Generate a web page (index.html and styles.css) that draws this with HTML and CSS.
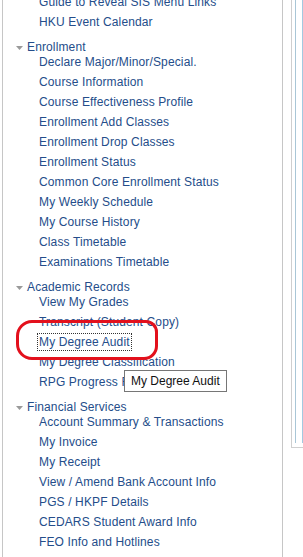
FILE: index.html
```html
<!DOCTYPE html>
<html>
<head>
<meta charset="utf-8">
<link rel="stylesheet" href="styles.css">
</head>
<body>
<div class="page">
  <nav class="panel">
    <ul class="items first">
      <li><a href="#">Guide to Reveal SIS Menu Links</a></li>
      <li><a href="#">HKU Event Calendar</a></li>
    </ul>
    <div class="section">
      <div class="head"><svg class="tri" width="7" height="4" viewBox="0 0 7 4"><path d="M0 0H7L3.5 4Z" fill="#9a9a9a"/></svg><a href="#">Enrollment</a></div>
      <ul class="items">
        <li><a href="#">Declare Major/Minor/Special.</a></li>
        <li><a href="#">Course Information</a></li>
        <li><a href="#">Course Effectiveness Profile</a></li>
        <li><a href="#">Enrollment Add Classes</a></li>
        <li><a href="#">Enrollment Drop Classes</a></li>
        <li><a href="#">Enrollment Status</a></li>
        <li><a href="#">Common Core Enrollment Status</a></li>
        <li><a href="#">My Weekly Schedule</a></li>
        <li><a href="#">My Course History</a></li>
        <li><a href="#">Class Timetable</a></li>
        <li><a href="#">Examinations Timetable</a></li>
      </ul>
    </div>
    <div class="section">
      <div class="head"><svg class="tri" width="7" height="4" viewBox="0 0 7 4"><path d="M0 0H7L3.5 4Z" fill="#9a9a9a"/></svg><a href="#">Academic Records</a></div>
      <ul class="items">
        <li><a href="#">View My Grades</a></li>
        <li><a href="#">Transcript (Student Copy)</a></li>
        <li><a href="#" class="focused">My Degree Audit</a></li>
        <li><a href="#">My Degree Classification</a></li>
        <li><a href="#">RPG Progress Report</a></li>
      </ul>
    </div>
    <div class="section">
      <div class="head"><svg class="tri" width="7" height="4" viewBox="0 0 7 4"><path d="M0 0H7L3.5 4Z" fill="#9a9a9a"/></svg><a href="#">Financial Services</a></div>
      <ul class="items">
        <li><a href="#">Account Summary &amp; Transactions</a></li>
        <li><a href="#">My Invoice</a></li>
        <li><a href="#">My Receipt</a></li>
        <li><a href="#">View / Amend Bank Account Info</a></li>
        <li><a href="#">PGS / HKPF Details</a></li>
        <li><a href="#">CEDARS Student Award Info</a></li>
        <li><a href="#">FEO Info and Hotlines</a></li>
      </ul>
    </div>
  </nav>
  <div class="side">
    <div class="side-inner"></div>
  </div>
  <div class="circle"></div>
  <div class="tooltip">My Degree Audit</div>
</div>
</body>
</html>
```
FILE: styles.css
```css
html, body {
  margin: 0;
  padding: 0;
  background: #fff;
  overflow: hidden;
}
body {
  width: 303px;
  height: 557px;
  font-family: "Liberation Sans", Arial, sans-serif;
  font-size: 12px;
}
.page {
  position: relative;
  display: flex;
  align-items: flex-start;
  gap: 8px;
  height: 557px;
  overflow: hidden;
}
.panel {
  box-sizing: border-box;
  margin-left: 2px;
  margin-top: -5px;
  width: 281px;
  height: 600px;
  border-left: 1px solid #c6c6c6;
  border-right: 1px solid #c6c6c6;
  flex: none;
  letter-spacing: 0.13px;
}
.items {
  list-style: none;
  margin: 0;
  padding: 0;
}
.items li {
  height: 20px;
  padding-left: 36px;
}
a {
  color: #244d8a;
  text-decoration: none;
}
.items a {
  display: inline-block;
  line-height: 14px;
}
.section {
  margin-top: 5px;
}
.head {
  display: flex;
  align-items: center;
  height: 14px;
  line-height: 14px;
  padding-left: 13px;
  margin-bottom: 1px;
}
.tri {
  display: block;
  margin-right: 4px;
  margin-top: 1px;
}
.focused {
  outline: 1px dotted #333;
  outline-offset: 1px;
}
.side {
  box-sizing: border-box;
  flex: none;
  width: 12px;
  height: 448px;
  border-left: 1px solid #cfcfcf;
  border-bottom: 1px solid #cfcfcf;
  padding-left: 3px;
}
.side-inner {
  box-sizing: border-box;
  width: 8px;
  height: 443px;
  border-left: 1px solid #a9c6d6;
  border-right: 1px solid #a3c9e0;
}
.circle {
  position: absolute;
  left: 16px;
  top: 320px;
  width: 142px;
  height: 40px;
  box-sizing: border-box;
  border: 3px solid #e3101c;
  border-radius: 16px 12px 14px 16px;
}
.tooltip {
  position: absolute;
  left: 124px;
  top: 370px;
  box-sizing: border-box;
  height: 22px;
  padding: 0 6px;
  border: 1px solid #767676;
  background: #fff;
  color: #111;
  font-size: 12px;
  line-height: 20px;
  white-space: nowrap;
}
```
